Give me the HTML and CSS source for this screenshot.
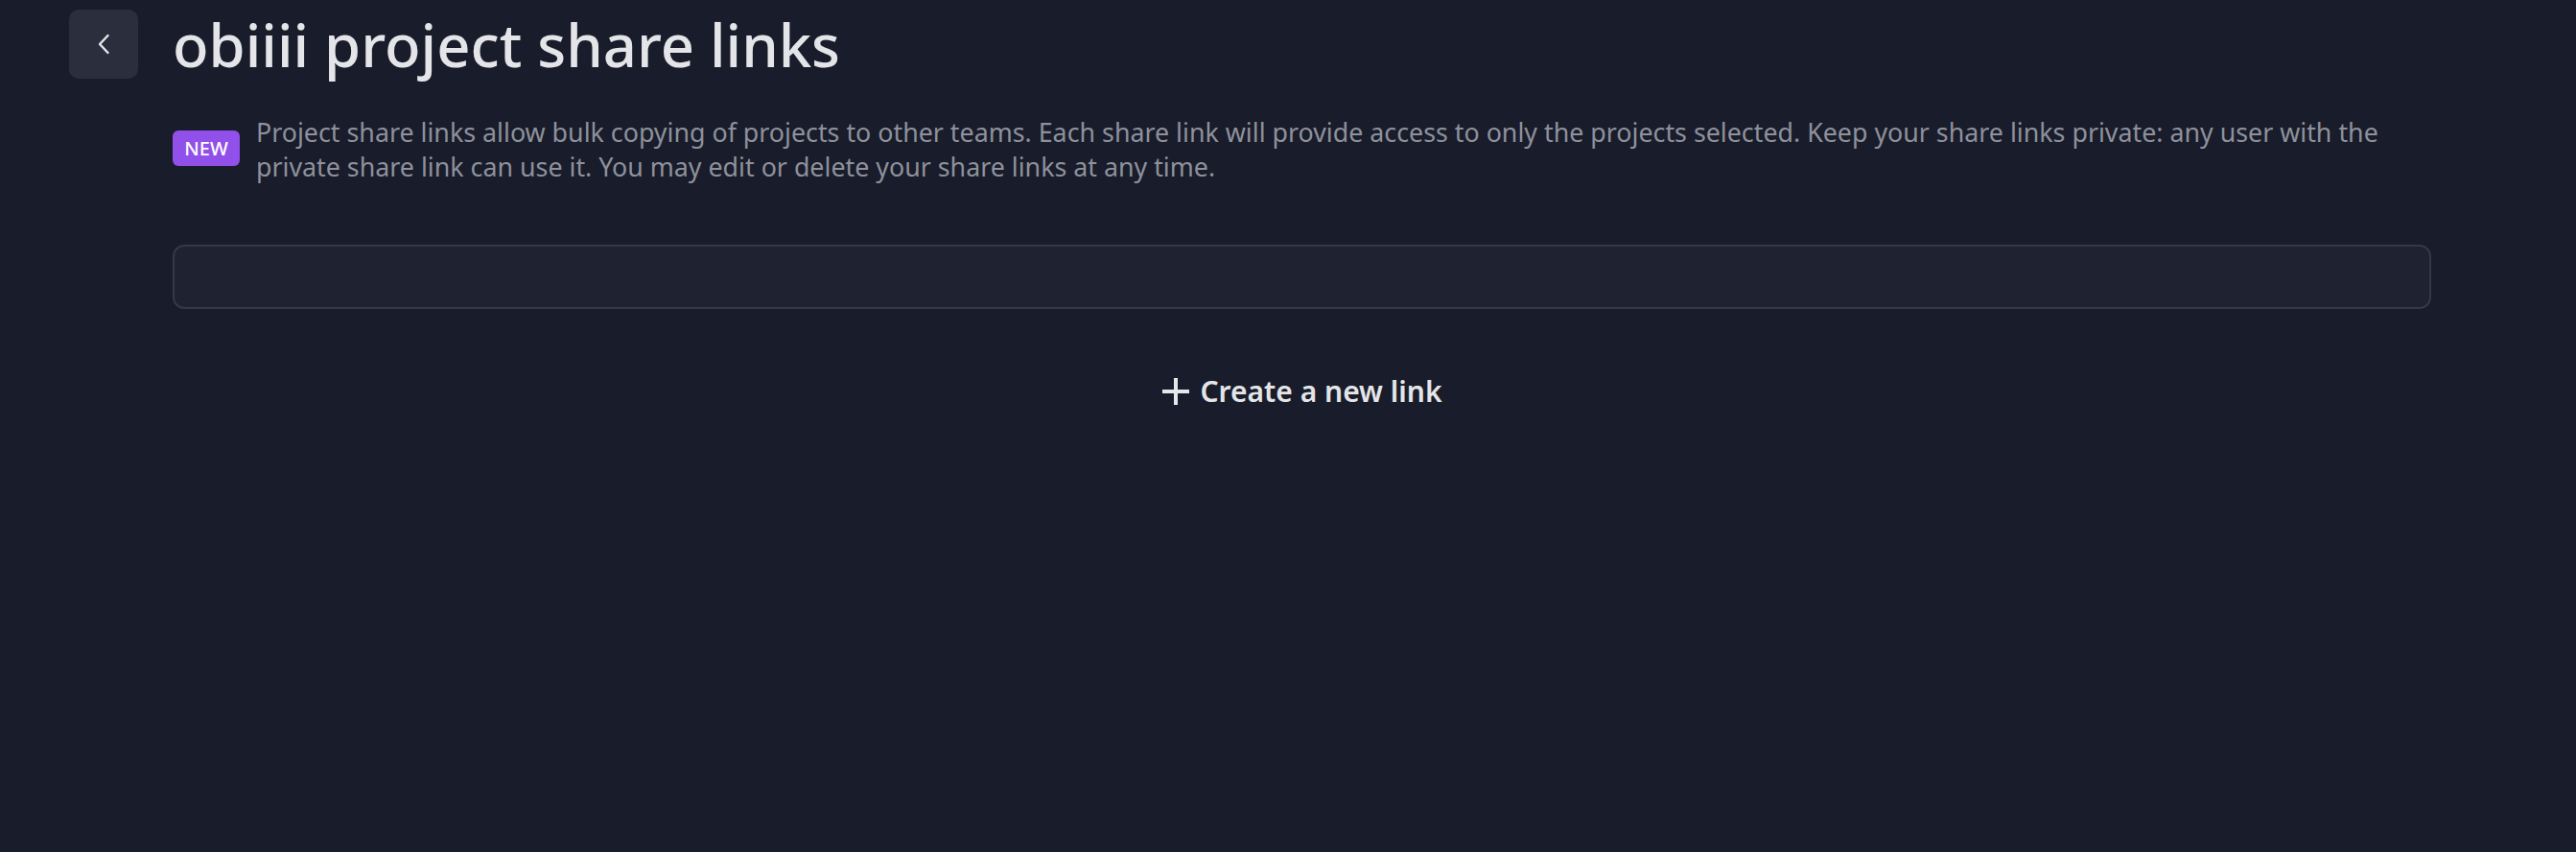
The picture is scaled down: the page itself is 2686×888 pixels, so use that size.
FILE: index.html
```html
<!DOCTYPE html>
<html lang="en">
<head>
<meta charset="utf-8">
<title>obiiii project share links</title>
<link rel="stylesheet" href="styles.css">
</head>
<body>
<div class="page">
  <button class="back" type="button" aria-label="Back">
    <svg width="14" height="22" viewBox="0 0 14 22" fill="none"><path d="M11.5 2 L3 11 L11.5 20" stroke="#e5e7eb" stroke-width="2.4" stroke-linecap="round" stroke-linejoin="round"/></svg>
  </button>
  <div class="main">
    <h1 class="title">obiiii project share links</h1>
    <div class="intro">
      <span class="badge">NEW</span>
      <p class="desc">Project share links allow bulk copying of projects to other teams. Each share link will provide access to only the projects selected. Keep your share links private: any user with the private share link can use it. You may edit or delete your share links at any time.</p>
    </div>
    <div class="list"></div>
    <div class="actions">
      <button class="create" type="button">
        <svg width="30" height="30" viewBox="0 0 30 30" fill="none"><path d="M15 1 V29 M1 15 H29" stroke="#e5e7eb" stroke-width="4"/></svg>
        <span>Create a new link</span>
      </button>
    </div>
  </div>
</div>
</body>
</html>
```
FILE: styles.css
```css
html, body {
  margin: 0;
  padding: 0;
  background: #191c2a;
  height: 100%;
}
body {
  font-family: "Noto Sans", "Open Sans", sans-serif;
  color: #e4e5e8;
}
.page {
  display: grid;
  grid-template-columns: 72px 1fr;
  column-gap: 36px;
  padding: 10px 151px 0 72px;
  align-items: start;
}
.back {
  width: 72px;
  height: 72px;
  border: 0;
  border-radius: 10px;
  background: #2b2f3d;
  display: flex;
  align-items: center;
  justify-content: center;
  padding: 0;
}
.main {
  min-width: 0;
}
.title {
  margin: 0;
  font-size: 61.5px;
  line-height: 72px;
  font-weight: 500;
  color: #e4e5e8;
}
.intro {
  display: flex;
  align-items: flex-start;
  gap: 17px;
  margin-top: 38px;
}
.badge {
  flex: none;
  width: 70px;
  height: 37px;
  border-radius: 6px;
  background: #9050e9;
  color: #ffffff;
  font-size: 20px;
  font-weight: 500;
  display: flex;
  align-items: center;
  justify-content: center;
  margin-top: 16px;
}
.desc {
  margin: 0;
  font-size: 26.8px;
  line-height: 36px;
  color: #8e919c;
}
.list {
  margin-top: 63px;
  height: 63px;
  border: 2px solid #343847;
  border-radius: 12px;
  background: #1f2230;
}
.actions {
  display: flex;
  justify-content: center;
  margin-top: 69px;
}
.create {
  display: flex;
  align-items: center;
  gap: 10px;
  border: 0;
  background: transparent;
  color: #e4e5e8;
  font-family: "Noto Sans", "Open Sans", sans-serif;
  font-size: 30px;
  line-height: 34px;
  font-weight: 600;
  padding: 0;
}
```
